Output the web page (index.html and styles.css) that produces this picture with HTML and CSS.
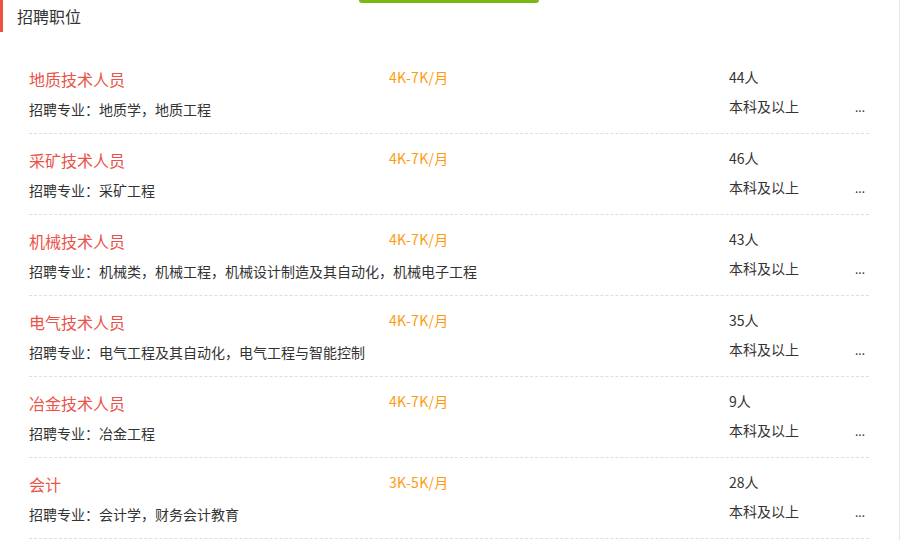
FILE: index.html
```html
<!DOCTYPE html>
<html lang="zh-CN">
<head>
<meta charset="utf-8">
<link rel="stylesheet" href="styles.css">
</head>
<body>
<div class="panel">
  <div class="tab-indicator"></div>
  <div class="head"><span class="head-title">招聘职位</span></div>
  <ul class="jobs">
    <li class="job">
      <div class="col-main"><div class="job-name">地质技术人员</div><div class="job-major">招聘专业：地质学，地质工程</div></div>
      <div class="col-pay">4K-7K/月</div>
      <div class="col-side"><div class="job-count">44人</div><div class="job-edu"><span>本科及以上</span><span class="more">...</span></div></div>
    </li>
    <li class="job">
      <div class="col-main"><div class="job-name">采矿技术人员</div><div class="job-major">招聘专业：采矿工程</div></div>
      <div class="col-pay">4K-7K/月</div>
      <div class="col-side"><div class="job-count">46人</div><div class="job-edu"><span>本科及以上</span><span class="more">...</span></div></div>
    </li>
    <li class="job">
      <div class="col-main"><div class="job-name">机械技术人员</div><div class="job-major">招聘专业：机械类，机械工程，机械设计制造及其自动化，机械电子工程</div></div>
      <div class="col-pay">4K-7K/月</div>
      <div class="col-side"><div class="job-count">43人</div><div class="job-edu"><span>本科及以上</span><span class="more">...</span></div></div>
    </li>
    <li class="job">
      <div class="col-main"><div class="job-name">电气技术人员</div><div class="job-major">招聘专业：电气工程及其自动化，电气工程与智能控制</div></div>
      <div class="col-pay">4K-7K/月</div>
      <div class="col-side"><div class="job-count">35人</div><div class="job-edu"><span>本科及以上</span><span class="more">...</span></div></div>
    </li>
    <li class="job">
      <div class="col-main"><div class="job-name">冶金技术人员</div><div class="job-major">招聘专业：冶金工程</div></div>
      <div class="col-pay">4K-7K/月</div>
      <div class="col-side"><div class="job-count">9人</div><div class="job-edu"><span>本科及以上</span><span class="more">...</span></div></div>
    </li>
    <li class="job">
      <div class="col-main"><div class="job-name">会计</div><div class="job-major">招聘专业：会计学，财务会计教育</div></div>
      <div class="col-pay">3K-5K/月</div>
      <div class="col-side"><div class="job-count">28人</div><div class="job-edu"><span>本科及以上</span><span class="more">...</span></div></div>
    </li>
  </ul>
</div>
</body>
</html>
```

FILE: styles.css
```css
html, body {
  margin: 0;
  padding: 0;
  background: #fff;
}
body {
  font-family: "Noto Sans CJK SC", "Noto Sans", sans-serif;
  color: #333;
  overflow: hidden;
}
.panel {
  position: relative;
  width: 899px;
  height: 540px;
  border-right: 1px solid #e6e6e6;
  box-sizing: content-box;
}
.tab-indicator {
  position: absolute;
  left: 359px;
  top: 0;
  width: 180px;
  height: 3px;
  background: #7ab816;
  border-radius: 0 0 3px 3px;
}
.head {
  height: 32px;
  border-left: 3px solid #e8523f;
  padding-left: 14px;
  display: flex;
  align-items: center;
}
.head-title {
  font-size: 16px;
  line-height: 20px;
  color: #333;
  margin-top: -1px;
}
.jobs {
  list-style: none;
  margin: 0;
  padding: 0 0 0 29px;
  width: 840px;
  margin-top: 21px;
}
.job {
  display: flex;
  padding: 16px 0 14px;
  border-bottom: 1px dashed #dedede;
}
.col-main {
  width: 360px;
  display: flex;
  flex-direction: column;
  gap: 10px;
}
.job-name {
  font-size: 16px;
  line-height: 20px;
  color: #eb5348;
}
.job-major {
  font-family: "Noto Sans CJK TC", "Noto Sans CJK SC", sans-serif;
  font-size: 14px;
  line-height: 20px;
  color: #333;
  white-space: nowrap;
}
.col-pay {
  width: 340px;
  font-size: 14px;
  line-height: 20px;
  color: #ff9a0d;
  margin-top: -2px;
  letter-spacing: 0.3px;
}
.col-side {
  width: 140px;
  display: flex;
  flex-direction: column;
  margin-top: -2px;
}
.job-count {
  font-size: 14px;
  line-height: 20px;
}
.job-edu {
  margin-top: 9px;
  display: flex;
  justify-content: space-between;
  font-size: 14px;
  line-height: 20px;
}
.more {
  font-size: 12px;
  margin-top: 1px;
  padding-right: 4px;
}
```
